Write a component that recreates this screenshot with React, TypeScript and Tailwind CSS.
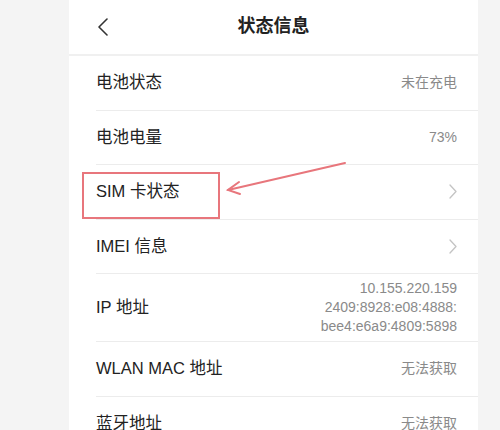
import React from "react";

const font = { fontFamily: '"Liberation Sans", "Noto Sans CJK SC", sans-serif' };

function ChevronRight() {
  return (
    <svg width="8" height="15" viewBox="0 0 8 15" fill="none">
      <path d="M1 1l6 6.5L1 14" stroke="#c4c4c4" strokeWidth="1.3" strokeLinecap="round" strokeLinejoin="round" />
    </svg>
  );
}

function Row({ label, value, arrow, tall }: { label: string; value?: React.ReactNode; arrow?: boolean; tall?: boolean }) {
  return (
    <div className={`ml-[27px] pr-[21px] flex items-center justify-between border-b border-[#ececec] box-border ${tall ? "h-[68px]" : "h-[54.5px]"}`}>
      <span className="text-[16.5px] text-[#222]">{label}</span>
      {value && <span className="text-[14px] text-[#8a8a8a] text-right leading-[19px]">{value}</span>}
      {arrow && <ChevronRight />}
    </div>
  );
}

export default function App() {
  return (
    <div className="w-[500px] h-[430px] overflow-hidden bg-[#f4f4f4] flex" style={font}>
      <div className="relative ml-[69px] w-[409px] bg-white">
        {/* HEADER */}
        <div className="relative h-[56px] flex items-center justify-center border-b-2 border-[#f0f0f0] box-border">
          <svg className="absolute left-[28px] top-[18px]" width="12" height="18" viewBox="0 0 12 18" fill="none">
            <path d="M10 1L2 9l8 8" stroke="#333" strokeWidth="1.6" strokeLinecap="round" strokeLinejoin="round" />
          </svg>
          <span className="text-[18px] font-bold text-[#222] -mt-[2px]">状态信息</span>
        </div>

        <Row label="电池状态" value="未在充电" />
        <Row label="电池电量" value="73%" />
        <Row label="SIM 卡状态" arrow />
        <Row label="IMEI 信息" arrow />
        <Row
          label="IP 地址"
          tall
          value={
            <>
              10.155.220.159
              <br />
              2409:8928:e08:4888:
              <br />
              bee4:e6a9:4809:5898
            </>
          }
        />
        <Row label="WLAN MAC 地址" value="无法获取" />
        <Row label="蓝牙地址" value="无法获取" />

        {/* annotation */}
        <div className="absolute left-[13px] top-[172px] w-[138px] h-[47px] border-2 border-[#e8767c]" />
        <svg className="absolute left-0 top-0 pointer-events-none" width="409" height="430">
          <g stroke="#e8767c" strokeWidth="2" strokeLinecap="round" fill="none">
            <path d="M276 163L159 190" />
            <path d="M170 182L159 190l12 4" />
          </g>
        </svg>
      </div>
    </div>
  );
}
